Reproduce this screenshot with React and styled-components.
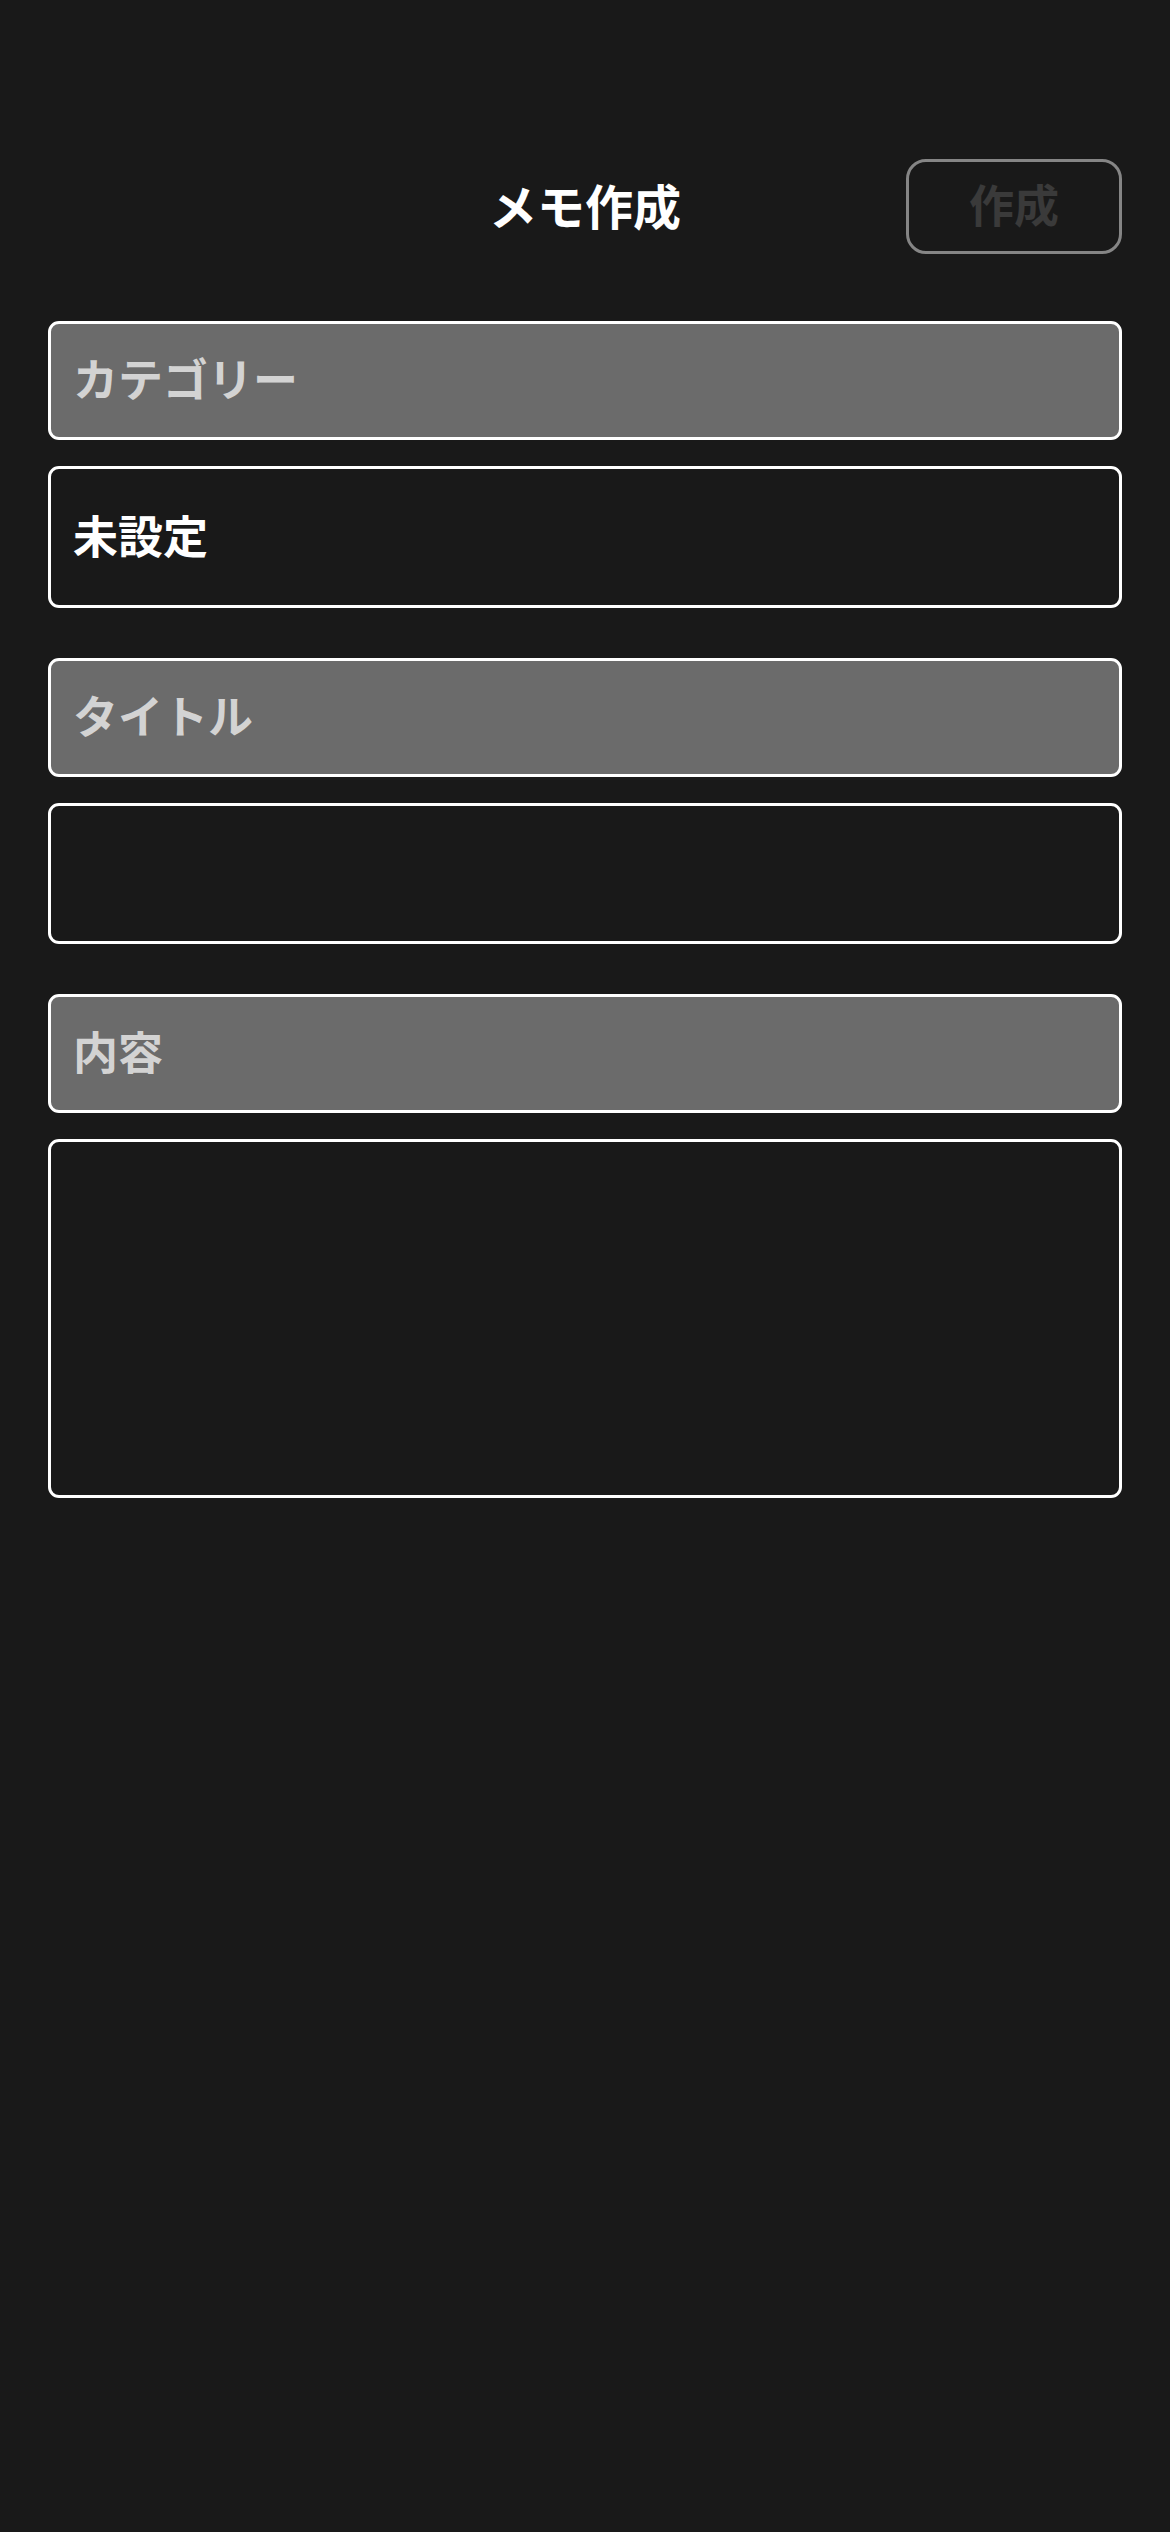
import React from "react";
import styled, { createGlobalStyle } from "styled-components";

const GlobalStyle = createGlobalStyle`
  html, body {
    margin: 0;
    padding: 0;
    background: #191919;
  }
  body {
    font-family: "Noto Sans CJK JP", "Noto Sans", sans-serif;
  }
  * { box-sizing: border-box; }
`;

const Screen = styled.div`
  min-height: 2532px;
  background: #191919;
  padding: 159px 48px 0;
  display: flex;
  flex-direction: column;
`;

const TopBar = styled.header`
  display: grid;
  grid-template-columns: 1fr auto 1fr;
  align-items: center;
  height: 95px;
`;

const Title = styled.h1`
  grid-column: 2;
  margin: 0 0 6px;
  font-size: 48px;
  font-weight: 700;
  color: #ffffff;
  line-height: 1;
  letter-spacing: 0;
`;

const CreateButton = styled.button`
  grid-column: 3;
  justify-self: end;
  width: 216px;
  height: 95px;
  border: 3px solid #858585;
  border-radius: 20px;
  background: transparent;
  color: #3a3a3a;
  font-family: "Noto Sans CJK JP", sans-serif;
  font-size: 45px;
  font-weight: 700;
  line-height: 1;
  padding: 0 0 6px;
`;

const Form = styled.main`
  display: flex;
  flex-direction: column;
  gap: 50px;
  margin-top: 67px;
`;

const Section = styled.section`
  display: flex;
  flex-direction: column;
  gap: 26px;
`;

const Label = styled.div`
  height: 119px;
  border: 3px solid #ffffff;
  border-radius: 11px;
  background: #6b6b6b;
  color: #d3d3d3;
  font-size: 45px;
  font-weight: 700;
  display: flex;
  align-items: center;
  padding: 0 22px 6px;
  line-height: 1;
`;

const Field = styled.div`
  height: ${(p) => p.$h}px;
  border: 3px solid #ffffff;
  border-radius: 11px;
  background: #191919;
  color: #ffffff;
  font-size: 45px;
  font-weight: 700;
  display: flex;
  align-items: ${(p) => (p.$multi ? "flex-start" : "center")};
  padding: 0 22px 6px;
  line-height: 1;
`;

export default function App() {
  return (
    <>
      <GlobalStyle />
      <Screen>
        <TopBar>
          <Title>メモ作成</Title>
          <CreateButton type="button">作成</CreateButton>
        </TopBar>
        <Form>
          <Section>
            <Label>カテゴリー</Label>
            <Field $h={142}>未設定</Field>
          </Section>
          <Section>
            <Label>タイトル</Label>
            <Field $h={141} />
          </Section>
          <Section>
            <Label>内容</Label>
            <Field $h={359} $multi />
          </Section>
        </Form>
      </Screen>
    </>
  );
}
